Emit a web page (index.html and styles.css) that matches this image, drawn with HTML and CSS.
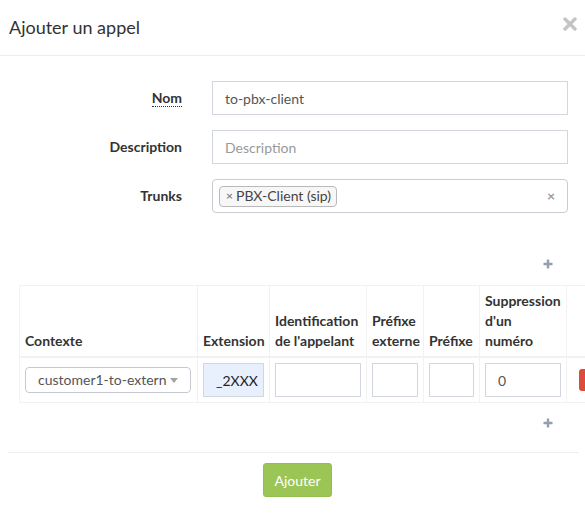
FILE: index.html
```html
<!DOCTYPE html>
<html lang="fr">
<head>
<meta charset="utf-8">
<title>Ajouter un appel</title>
<link rel="stylesheet" href="styles.css">
</head>
<body>
<div class="modal">
  <div class="modal-header">
    <h4 class="modal-title">Ajouter un appel</h4>
    <button class="close" type="button" aria-label="Fermer">
      <svg width="14" height="14" viewBox="0 0 14 14"><path d="M2 2 L12 12 M12 2 L2 12" stroke="#c4c4c4" stroke-width="3.4" stroke-linecap="round"/></svg>
    </button>
  </div>
  <div class="modal-body">
    <div class="form-grid">
      <label class="form-label"><abbr title="Obligatoire">Nom</abbr></label>
      <input class="form-control" type="text" value="to-pbx-client">
      <label class="form-label">Description</label>
      <input class="form-control" type="text" placeholder="Description">
      <label class="form-label">Trunks</label>
      <div class="select2-multi">
        <span class="tag"><span class="tag-x">×</span>PBX-Client (sip)</span>
        <span class="clear-x">×</span>
      </div>
    </div>
    <div class="plus-row first">
      <svg class="plus" width="10" height="10" viewBox="0 0 10 10"><path d="M5 0.5 V9.5 M0.5 5 H9.5" stroke="#959db0" stroke-width="2.4"/></svg>
    </div>
    <div class="table-wrap">
      <table class="rules">
        <colgroup>
          <col class="c-ctx"><col class="c-ext"><col class="c-id"><col class="c-pe"><col class="c-pf"><col class="c-sup"><col class="c-act">
        </colgroup>
        <thead>
          <tr>
            <th>Contexte</th>
            <th>Extension</th>
            <th>Identification<br>de l'appelant</th>
            <th>Préfixe<br>externe</th>
            <th>Préfixe</th>
            <th>Suppression<br>d'un<br>numéro</th>
            <th></th>
          </tr>
        </thead>
        <tbody>
          <tr>
            <td>
              <div class="select-single"><span>customer1-to-extern</span><span class="caret"></span></div>
            </td>
            <td><input class="form-control cell-input autofill" type="text" value="_2XXX"></td>
            <td><input class="form-control cell-input" type="text"></td>
            <td><input class="form-control cell-input" type="text"></td>
            <td><input class="form-control cell-input" type="text"></td>
            <td><input class="form-control cell-input" type="text" value="0"></td>
            <td><span class="btn-danger"></span></td>
          </tr>
        </tbody>
      </table>
    </div>
    <div class="plus-row second">
      <svg class="plus" width="10" height="10" viewBox="0 0 10 10"><path d="M5 0.5 V9.5 M0.5 5 H9.5" stroke="#959db0" stroke-width="2.4"/></svg>
    </div>
  </div>
  <div class="modal-footer">
    <button class="btn-success" type="button">Ajouter</button>
  </div>
</div>
</body>
</html>
```
FILE: styles.css
```css
html, body {
  margin: 0;
  padding: 0;
  background: #ffffff;
  overflow: hidden;
}
body {
  font-family: "Lato", "Liberation Sans", sans-serif;
  font-size: 14px;
  line-height: 20px;
  color: #333333;
}
.modal {
  width: 585px;
}
.modal-header {
  border-bottom: 1px solid #ececec;
  display: flex;
  align-items: flex-start;
  justify-content: space-between;
  padding: 0 8px 0 9px;
  box-sizing: border-box;
  height: 56px;
}
.modal-title {
  margin: 0;
  padding-top: 15px;
  font-size: 18px;
  font-weight: 400;
  line-height: 24px;
  color: #333;
}
.close {
  border: 0;
  background: none;
  padding: 0;
  margin-top: 17px;
  width: 14px;
  height: 14px;
  display: block;
}
.close svg { display: block; }
.modal-body {
  padding-top: 25px;
}
.form-grid {
  display: grid;
  grid-template-columns: 174px 356px;
  column-gap: 30px;
  row-gap: 15px;
  padding-left: 8px;
  align-items: center;
}
.form-label {
  text-align: right;
  font-weight: 700;
  font-size: 14px;
}
.form-label abbr {
  text-decoration: none;
  border-bottom: 1px dotted #333;
  cursor: help;
}
.form-control {
  box-sizing: border-box;
  height: 34px;
  width: 100%;
  border: 1px solid #d2d6de;
  border-radius: 0;
  padding: 6px 12px;
  font-family: inherit;
  font-size: 14px;
  color: #555;
  background: #fff;
  margin: 0;
}
.form-control::placeholder { color: #999; }
.select2-multi {
  box-sizing: border-box;
  height: 34px;
  border: 1px solid #c9ccd2;
  border-radius: 4px;
  display: flex;
  align-items: center;
  justify-content: space-between;
  padding: 0 12px 0 6px;
}
.tag {
  box-sizing: border-box;
  height: 21px;
  border: 1px solid #b9b9b9;
  border-radius: 4px;
  background: #f7f7f7;
  padding: 0 5px 0 6px;
  display: flex;
  align-items: center;
  font-size: 14px;
  color: #444;
}
.tag-x {
  color: #888;
  font-weight: 700;
  font-size: 12px;
  margin-right: 3px;
}
.clear-x {
  color: #999;
  font-size: 14px;
  font-weight: 700;
}
.plus-row {
  display: flex;
  justify-content: flex-end;
  padding-right: 32px;
}
.plus-row.first { margin-top: 46px; }
.plus-row.second { margin-top: 15px; }
.plus { display: block; }
.table-wrap {
  margin-top: 16px;
  padding-left: 19px;
  width: 566px;
  overflow: hidden;
}
.rules {
  border-collapse: collapse;
  table-layout: fixed;
  width: 610px;
  border: 1px solid #f2f2f2;
}
.c-ctx { width: 178px; }
.c-ext { width: 72px; }
.c-id { width: 97px; }
.c-pe { width: 57px; }
.c-pf { width: 56px; }
.c-sup { width: 87px; }
.c-act { width: 63px; }
.rules th {
  text-align: left;
  vertical-align: bottom;
  font-weight: 700;
  padding: 5px 5px;
  line-height: 20px;
  white-space: nowrap;
  border: 1px solid #f2f2f2;
  border-bottom: 2px solid #f2f2f2;
  color: #333;
}
.rules td {
  padding: 5px 5px;
  vertical-align: middle;
  border: 1px solid #f2f2f2;
}
.cell-input {
  height: 34px;
}
.autofill {
  background: #e8f0fe;
  color: #222;
  padding: 6px 0 6px 12px;
}
.select-single {
  box-sizing: border-box;
  width: 166px;
  height: 26px;
  border: 1px solid #c6c9cf;
  border-radius: 4px;
  display: flex;
  align-items: center;
  justify-content: space-between;
  padding: 0 12px 0 12px;
  color: #555;
  font-size: 14px;
}
.caret {
  width: 0;
  height: 0;
  border-left: 4px solid transparent;
  border-right: 4px solid transparent;
  border-top: 5px solid #a3a3a3;
}
.btn-danger {
  display: block;
  width: 24px;
  height: 22px;
  margin-left: 7px;
  background: #dd4b39;
  border-radius: 3px;
}
.modal-footer {
  margin: 24px 6px 0 8px;
  border-top: 1px solid #eeeeee;
  padding: 10px 0 0 255px;
}
.btn-success {
  width: 69px;
  height: 34px;
  background: #9bc554;
  border: 1px solid #93bd4c;
  border-radius: 3px;
  color: #fff;
  font-family: inherit;
  font-size: 14px;
  padding: 0;
}
```
